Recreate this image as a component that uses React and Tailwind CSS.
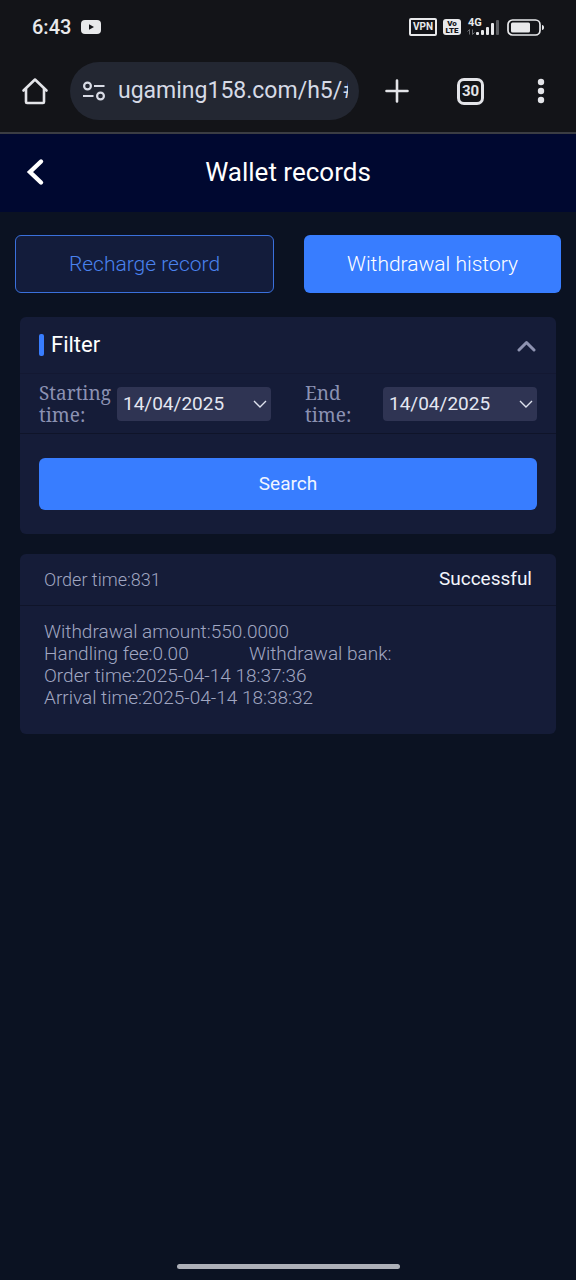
import React, { useState } from "react";

function StatusBar() {
  return (
    <div className="flex h-[54px] items-center justify-between pl-8 pr-8 text-[#e8e9eb]">
      <div className="flex items-center gap-2.5">
        <span className="text-[20px] leading-6 font-medium">6:43</span>
        <svg width="20" height="14" viewBox="0 0 20 14" aria-hidden="true">
          <rect width="20" height="14" rx="4" fill="#e8e9eb" />
          <path d="M8 4.2v5.6L13 7z" fill="#131418" />
        </svg>
      </div>

      <div className="flex items-center gap-1.5">
        <span className="flex h-[18px] w-7 items-center justify-center rounded-xs border-2 border-[#e8e9eb] text-[10px] leading-none font-bold">
          VPN
        </span>
        <span className="flex h-4 w-[18px] flex-col items-center justify-center rounded-[3px] bg-[#e8e9eb] text-[8px] leading-[7px] font-black text-[#131418]">
          <span>Vo</span>
          <span>LTE</span>
        </span>
        <svg className="mr-0.5" width="32" height="24" viewBox="0 -3 32 24" aria-label="4G signal" role="img">
          <text x="1" y="8" fontSize="11" fontWeight="700" fill="#e8e9eb">
            4G
          </text>
          <g stroke="#6a6c71" strokeWidth="1" fill="none">
            <path d="M2.5 16.500v-5L0.500 13.500M5.500 11.500v5L7.500 14.500" />
          </g>
          <g fill="#e8e9eb">
            <rect x="9" y="14" width="3" height="3" rx="1" />
            <rect x="14" y="12" width="3" height="5" rx="1" />
            <rect x="19" y="9" width="3" height="8" rx="1" />
            <rect x="24" y="5" width="3" height="12" rx="1" />
          </g>
          <rect x="29" y="2" width="3" height="15" rx="1" fill="#5b5d61" />
        </svg>
        <svg width="37" height="17" viewBox="0 0 37 17" aria-label="Battery" role="img">
          <rect x="1" y="1" width="32" height="15" rx="4.500" fill="none" stroke="#e8e9eb" strokeWidth="1.700" />
          <rect x="4" y="3.500" width="19" height="10" rx="1.500" fill="#e8e9eb" />
          <path d="M35 6v5c1.300 0 2-1 2-2.500S36.300 6 35 6z" fill="#e8e9eb" />
        </svg>
      </div>
    </div>
  );
}

function BrowserBar() {
  return (
    <div className="flex items-center border-b-2 border-[#3b3d43] pt-2 pr-[30px] pb-3 pl-[21px] text-[#e3e4e8]">
      <button type="button" aria-label="Home">
        <svg width="28" height="28" viewBox="0 0 28 28" fill="none" stroke="currentColor" strokeWidth="2.600" strokeLinejoin="round" strokeLinecap="round">
          <path d="M2.500 13.500L14 2.500l11.500 11" />
          <path d="M5 12v13a1 1 0 0 0 1 1h16a1 1 0 0 0 1-1V12" />
        </svg>
      </button>

      <div className="ml-[21px] flex h-[58px] min-w-0 flex-1 items-center gap-3 rounded-full bg-[#232732] pr-[11px] pl-3">
        <svg className="shrink-0" width="24" height="20" viewBox="0 0 24 20" fill="none" stroke="#d9dce6" strokeWidth="2.200" aria-hidden="true">
          <circle cx="5.500" cy="5" r="3.400" />
          <path d="M12 5h10.500M1 15h10.500" />
          <circle cx="18.500" cy="15" r="3.400" />
        </svg>
        <input
          type="text"
          aria-label="Address"
          className="h-8 w-full min-w-0 bg-transparent text-[23px] leading-8 text-[#d6dae6] outline-none"
          defaultValue="ugaming158.com/h5/#"
        />
      </div>

      <button type="button" aria-label="New tab" className="ml-[26px]">
        <svg width="24" height="24" viewBox="0 0 24 24" stroke="currentColor" strokeWidth="2.600" strokeLinecap="round">
          <path d="M12 1.500v21M1.500 12h21" />
        </svg>
      </button>
      <button
        type="button"
        aria-label="30 open tabs"
        className="ml-12 flex size-[27px] items-center justify-center rounded-[7px] border-[3px] border-current text-[15px] leading-none font-bold"
      >
        30
      </button>
      <button type="button" aria-label="Menu" className="ml-[52px]">
        <svg width="10" height="26" viewBox="0 0 10 26" fill="currentColor">
          <circle cx="5" cy="4" r="3.200" />
          <circle cx="5" cy="13" r="3.200" />
          <circle cx="5" cy="22" r="3.200" />
        </svg>
      </button>
    </div>
  );
}

function DateField({ id, label }) {
  const [value, setValue] = useState("14/04/2025");

  return (
    <div className="flex flex-1 items-center">
      <label
        htmlFor={id}
        className="w-[78px] shrink-0 font-['Noto_Serif','DejaVu_Serif',serif] text-[19px] leading-[22px] text-[#8b91b2]"
      >
        {label}
      </label>
      <div className="flex h-[34px] min-w-0 flex-1 items-center rounded-[4px] bg-[#2f3453] pr-1 pl-1.5">
        <input
          id={id}
          type="text"
          value={value}
          onChange={(e) => setValue(e.target.value)}
          className="h-6 w-full min-w-0 bg-transparent text-[19px] leading-6 text-[#e4e7f2] outline-none"
        />
        <svg className="shrink-0" width="14" height="8" viewBox="0 0 14 8" fill="none" stroke="#dfe2ee" strokeWidth="1.400" aria-hidden="true">
          <path d="M1 1l6 6 6-6" />
        </svg>
      </div>
    </div>
  );
}

function FilterCard() {
  const [open, setOpen] = useState(true);

  return (
    <section className="rounded-md bg-[#151c38]">
      <button
        type="button"
        aria-expanded={open}
        onClick={() => setOpen(!open)}
        className="flex h-[57px] w-full items-center border-b border-[#131832] px-[19px]"
      >
        <span className="h-[22px] w-[5px] rounded-xs bg-[#387dff]" />
        <span className="ml-[7px] text-[22px] leading-7 text-white">Filter</span>
        <svg className="ml-auto" width="22" height="14" viewBox="0 0 22 14" fill="none" stroke="#8e93b1" strokeWidth="3" strokeLinecap="round" strokeLinejoin="round">
          <path d={open ? "M4 12l7.500-7.500L19 12" : "M4 4l7.500 7.500L19 4"} />
        </svg>
      </button>

      {open && (
        <div className="flex gap-[34px] border-b border-[#0f1429] px-[19px] pt-2 pb-[7px]">
          <DateField id="start" label="Starting time:" />
          <DateField id="end" label="End time:" />
        </div>
      )}

      <div className="px-[19px] py-6">
        <button type="button" className="h-[52px] w-full rounded-md bg-[#387dff] text-[19px] text-[#f1f5ff]">
          Search
        </button>
      </div>
    </section>
  );
}

function RecordCard({ record }) {
  return (
    <section className="rounded-md bg-[#151c38] font-light text-[#a1a7c2]">
      <div className="flex h-[52px] items-center justify-between border-b border-[#0f1429] px-6">
        <span className="text-[18px]">Order time:{record.order}</span>
        <span className="text-[19px] font-normal text-[#f3f5fb]">{record.status}</span>
      </div>
      <div className="px-6 pt-[15px] pb-[25px] text-[19px] leading-[22px]">
        <p>Withdrawal amount:{record.amount}</p>
        <div className="flex">
          <p className="w-[42%]">Handling fee:{record.fee}</p>
          <p>Withdrawal bank:{record.bank}</p>
        </div>
        <p>Order time:{record.orderedAt}</p>
        <p>Arrival time:{record.arrivedAt}</p>
      </div>
    </section>
  );
}

const records = [
  {
    order: "831",
    status: "Successful",
    amount: "550.0000",
    fee: "0.00",
    bank: "",
    orderedAt: "2025-04-14 18:37:36",
    arrivedAt: "2025-04-14 18:38:32",
  },
];

export default function App() {
  return (
    <div className="flex min-h-screen flex-col bg-[#0b1222] font-[Roboto,sans-serif]">
      <div className="bg-[#131418]">
        <StatusBar />
        <BrowserBar />
      </div>

      {/* Header */}
      <header className="grid h-[78px] grid-cols-[60px_1fr_60px] items-center bg-[#000830] pb-0.5">
        <button type="button" aria-label="Back" className="pl-[26px]">
          <svg width="20" height="28" viewBox="0 0 20 28" fill="none" stroke="#fff" strokeWidth="4.400" strokeLinecap="round">
            <path d="M15 3.500L4 14l11 10.500" />
          </svg>
        </button>
        <h1 className="text-center text-[26px] leading-8 text-white">Wallet records</h1>
      </header>

      <main>
        {/* Tabs */}
        <div className="flex gap-[30px] px-[15px] pt-[23px] pb-6">
          <button
            type="button"
            className="h-[58px] flex-1 rounded-md border border-[#3a70dc] bg-[#131c3b] pt-0.5 text-[21px] font-light text-[#4a82ee]"
          >
            Recharge record
          </button>
          <button
            type="button"
            className="h-[58px] flex-1 rounded-md bg-[#387dff] pt-0.5 text-[21px] font-light text-white"
          >
            Withdrawal history
          </button>
        </div>

        <div className="flex flex-col gap-5 px-5">
          <FilterCard />
          {records.map((record) => (
            <RecordCard key={record.order} record={record} />
          ))}
        </div>
      </main>

      <div className="mx-auto mt-auto mb-[11px] h-[5px] w-[223px] rounded-full bg-[#adb0b8]" />
    </div>
  );
}
